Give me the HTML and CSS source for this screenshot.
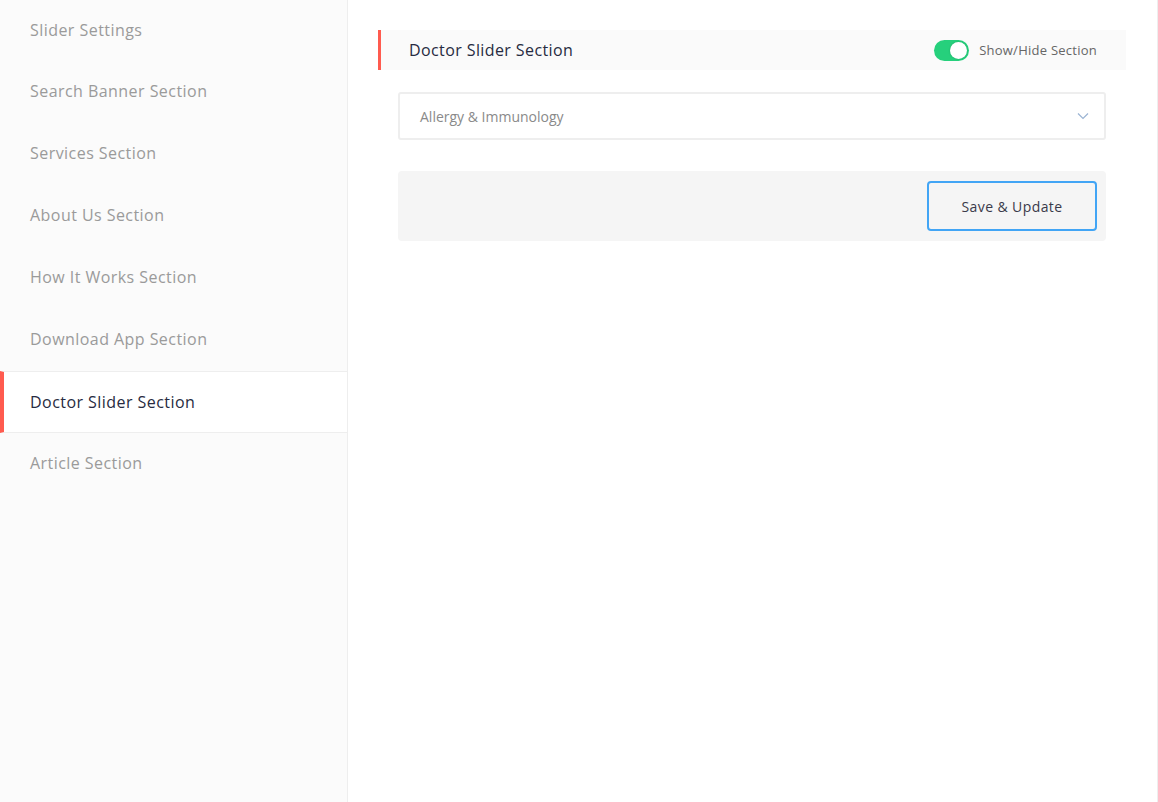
FILE: index.html
```html
<!DOCTYPE html>
<html>
<head>
<meta charset="utf-8">
<link rel="stylesheet" href="styles.css">
</head>
<body>
<div class="page">
  <aside class="sidebar">
    <div class="nav-item">Slider Settings</div>
    <div class="nav-item">Search Banner Section</div>
    <div class="nav-item">Services Section</div>
    <div class="nav-item">About Us Section</div>
    <div class="nav-item">How It Works Section</div>
    <div class="nav-item">Download App Section</div>
    <div class="nav-item active">Doctor Slider Section</div>
    <div class="nav-item">Article Section</div>
  </aside>
  <main class="main">
    <div class="section-head">
      <h2 class="section-title">Doctor Slider Section</h2>
      <label class="toggle-wrap">
        <span class="toggle"><span class="knob"></span></span>
        <span class="toggle-label">Show/Hide Section</span>
      </label>
    </div>
    <div class="body">
      <div class="select">
        <span class="select-text">Allergy &amp; Immunology</span>
        <svg class="chev" width="12" height="8" viewBox="0 0 12 8"><path d="M1 1.5 L6 6.5 L11 1.5" fill="none" stroke="#9bb4d3" stroke-width="1.2"/></svg>
      </div>
      <div class="actions">
        <button class="btn">Save &amp; Update</button>
      </div>
    </div>
  </main>
</div>
</body>
</html>
```
FILE: styles.css
```css
* { box-sizing: border-box; }
html, body { margin: 0; padding: 0; background: #fff; }
body { font-family: "Open Sans", "Liberation Sans", sans-serif; }
.page { display: flex; height: 802px; }
.sidebar {
  width: 348px;
  flex: none;
  background: #fbfbfb;
  border-right: 1px solid #eeeeee;
  display: flex;
  flex-direction: column;
}
.nav-item {
  height: 62px;
  display: flex;
  align-items: center;
  font-size: 16px;
  color: #9a9a9a;
  letter-spacing: 0.45px;
  border-left: 4px solid transparent;
  padding-left: 26px;
}
.nav-item:first-child { height: 60px; }
.nav-item.active {
  height: 62px;
  background: #fff;
  color: #272b41;
  border-left-color: #ff5b4f;
  border-top: 1px solid #eeeeee;
  border-bottom: 1px solid #eeeeee;
  margin-top: 1px;
}
.nav-item.active + .nav-item { padding-bottom: 3px; }
.main {
  flex: 1;
  padding: 30px 31px 0 30px;
  border-right: 1px solid #eeeeee;
}
.section-head {
  height: 40px;
  background: #fafafa;
  border-left: 3px solid #ff5b4f;
  display: flex;
  align-items: center;
  justify-content: space-between;
  padding: 0 29px 0 28px;
}
.section-title {
  margin: 0;
  font-size: 16px;
  font-weight: 400;
  color: #272b41;
  letter-spacing: 0.4px;
  padding-bottom: 1px;
}
.toggle-wrap { display: flex; align-items: center; gap: 10px; }
.toggle {
  width: 35px; height: 21px;
  border-radius: 11px;
  background: #26d07c;
  position: relative;
  display: block;
}
.knob {
  position: absolute;
  right: 2px; top: 2px;
  width: 17px; height: 17px;
  border-radius: 50%;
  background: #fff;
  box-shadow: 0 0 2px rgba(0,0,0,0.2);
}
.toggle-label { font-size: 13px; color: #666; letter-spacing: 0.25px; }
.body { padding: 22px 20px 0 20px; display: flex; flex-direction: column; gap: 31px; }
.select {
  height: 48px;
  border: 2px solid #eeeeee;
  border-radius: 3px;
  display: flex;
  align-items: center;
  justify-content: space-between;
  padding: 0 15px 0 20px;
}
.select-text { font-size: 14px; color: #8a8a8a; }
.actions {
  height: 70px;
  background: #f5f5f5;
  border-radius: 4px;
  display: flex;
  align-items: center;
  justify-content: flex-end;
  padding-right: 9px;
}
.btn {
  width: 170px; height: 50px;
  border: 2px solid #42a5f5;
  border-radius: 4px;
  background: #f5f5f5;
  font-family: "Open Sans", "Liberation Sans", sans-serif;
  font-size: 14px;
  letter-spacing: 0.4px;
  color: #3a3a4a;
}
```
